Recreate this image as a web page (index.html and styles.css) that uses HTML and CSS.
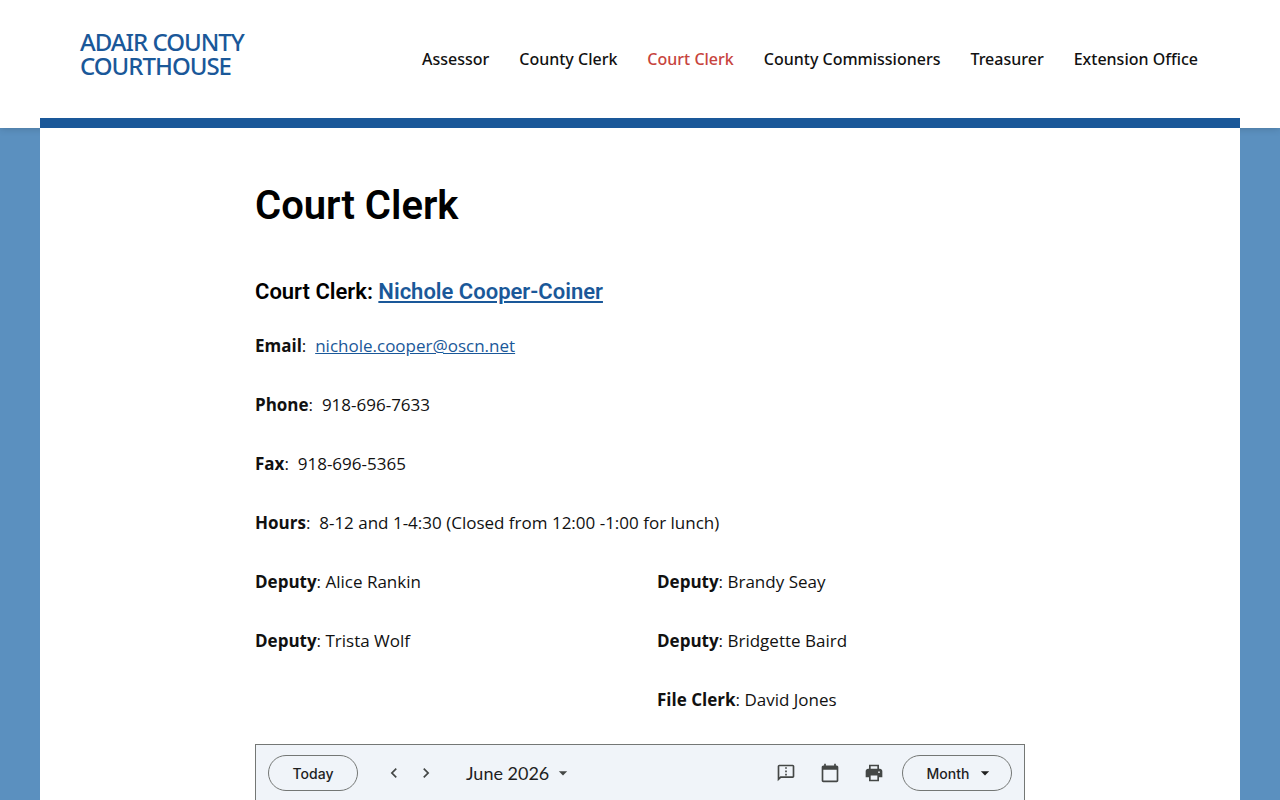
FILE: index.html
```
<!DOCTYPE html>
<html lang="en-US">
<head>
    <meta charset="UTF-8">
    <meta name="viewport" content="width=device-width, initial-scale=1.0">
    <title>Court Clerk - Adair County Courthouse</title>
    <link rel="stylesheet" href="styles.css">
</head>
<body>
    <header class="site-header">
        <a class="site-title" href="#">ADAIR COUNTY<br>COURTHOUSE</a>
        <nav class="main-nav" aria-label="Main">
            <a href="#">Assessor</a>
            <a href="#">County Clerk</a>
            <a href="#" class="current" aria-current="page">Court Clerk</a>
            <a href="#">County Commissioners</a>
            <a href="#">Treasurer</a>
            <a href="#">Extension Office</a>
        </nav>
    </header>

    <main class="site-content">
        <article class="entry">
            <h1>Court Clerk</h1>
            <h2>Court Clerk: <a href="#">Nichole Cooper-Coiner</a></h2>

            <p><strong>Email</strong>:&nbsp; <a href="mailto:nichole.cooper@oscn.net">nichole.cooper@oscn.net</a></p>
            <p><strong>Phone</strong>:&nbsp; 918-696-7633</p>
            <p><strong>Fax</strong>:&nbsp; 918-696-5365</p>
            <p><strong>Hours</strong>:&nbsp; 8-12 and 1-4:30 (Closed from 12:00 -1:00 for lunch)</p>

            <div class="columns">
                <div class="column">
                    <p><strong>Deputy</strong>: Alice Rankin</p>
                    <p><strong>Deputy</strong>: Trista Wolf</p>
                </div>
                <div class="column">
                    <p><strong>Deputy</strong>: Brandy Seay</p>
                    <p><strong>Deputy</strong>: Bridgette Baird</p>
                    <p><strong>File Clerk</strong>: David Jones</p>
                </div>
            </div>

            <!-- Calendar -->
            <section class="calendar" aria-label="Calendar">
                <div class="calendar-toolbar">
                    <button type="button" class="pill">Today</button>
                    <div class="pager">
                        <button type="button" class="icon-btn" aria-label="Previous month">
                            <svg width="20" height="20" viewBox="0 0 24 24"><path d="M15.41 7.41L14 6l-6 6 6 6 1.41-1.41L10.83 12z"/></svg>
                        </button>
                        <button type="button" class="icon-btn" aria-label="Next month">
                            <svg width="20" height="20" viewBox="0 0 24 24"><path d="M10 6L8.59 7.41 13.17 12l-4.58 4.59L10 18l6-6z"/></svg>
                        </button>
                    </div>
                    <button type="button" class="date-btn">
                        June 2026
                        <svg width="20" height="20" viewBox="0 0 24 24"><path d="M7 10l5 5 5-5z"/></svg>
                    </button>
                    <div class="tools">
                        <button type="button" class="icon-btn" aria-label="Send feedback">
                            <svg width="20" height="20" viewBox="0 0 24 24"><path d="M20 2H4c-1.100 0-2 .9-2 2v18l4-4h14c1.100 0 2-.9 2-2V4c0-1.100-.9-2-2-2zm0 14H5.200L4 17.200V4h16v12zM11 5h2v2h-2zm0 4h2v2h-2zm0 4h2v2h-2z"/></svg>
                        </button>
                        <button type="button" class="icon-btn" aria-label="Calendar">
                            <svg width="20" height="20" viewBox="0 0 24 24"><path d="M20 3h-1V1h-2v2H7V1H5v2H4c-1.100 0-2 .9-2 2v16c0 1.100.9 2 2 2h16c1.100 0 2-.9 2-2V5c0-1.100-.9-2-2-2zm0 18H4V8h16v13z"/></svg>
                        </button>
                        <button type="button" class="icon-btn" aria-label="Print">
                            <svg width="20" height="20" viewBox="0 0 24 24"><path fill-rule="evenodd" d="M18 7V2H6v5H5c-1.660 0-3 1.340-3 3v7h4v5h12v-5h4v-7c0-1.660-1.340-3-3-3h-1zM8 4h8v3H8V4zm8 16H8v-5h8v5zm2-8a1 1 0 1 1 0-2 1 1 0 0 1 0 2z"/></svg>
                        </button>
                    </div>
                    <button type="button" class="pill view-btn">
                        Month
                        <svg width="20" height="20" viewBox="0 0 24 24"><path d="M7 10l5 5 5-5z"/></svg>
                    </button>
                </div>
            </section>
        </article>
    </main>
</body>
</html>
```
FILE: styles.css
```
* {
    box-sizing: border-box;
}

body {
    margin: 0;
    background: #5b90bf;
    color: #111;
    font-family: "Open Sans", sans-serif;
    font-size: 17px;
    line-height: 30px;
}

a {
    color: #1a5899;
}

/* Header */
.site-header {
    display: flex;
    justify-content: space-between;
    align-items: center;
    min-height: 128px;
    padding: 0 82px 20px 80px;
    background: #fff;
    box-shadow: 0 0 8px rgba(0, 0, 0, 0.2);
    font-family: "Noto Sans", sans-serif;
    font-weight: 500;
}

.site-title {
    font-size: 24px;
    line-height: 24px;
    letter-spacing: -1px;
    text-decoration: none;
}

.main-nav {
    display: flex;
    gap: 30px;
    padding-top: 10px;
    font-size: 16px;
}

.main-nav a {
    color: #111;
    text-decoration: none;
    white-space: nowrap;
}

.main-nav .current {
    color: #c7443d;
}

/* Content */
.site-content {
    position: relative;
    min-height: calc(100vh - 118px);
    margin: -10px 40px 0;
    padding: 53px 40px 0;
    background: #fff;
    border-top: 10px solid #1a5899;
}

.entry {
    max-width: 770px;
    margin: 0 auto;
}

h1,
h2 {
    margin: 0;
    color: #000;
    font-family: Roboto, sans-serif;
    font-weight: 600;
}

h1 {
    margin-bottom: 46px;
    font-size: 40px;
    line-height: 50px;
}

h2 {
    margin-bottom: 24px;
    font-size: 22px;
    line-height: 30px;
}

p {
    margin: 0 0 29px;
}

.columns {
    display: grid;
    grid-template-columns: 1fr 1fr;
    gap: 34px;
}

/* Calendar */
.calendar {
    border: 1px solid #747775;
    border-bottom: 0;
    background: #f0f4f9;
    font-family: Inter, sans-serif;
}

.calendar-toolbar {
    display: flex;
    align-items: center;
    padding: 10px 12px;
}

.calendar button {
    display: flex;
    align-items: center;
    justify-content: center;
    height: 36px;
    padding: 0;
    border: 0;
    background: none;
    color: #1f1f1f;
    font-family: inherit;
    cursor: pointer;
}

.calendar svg {
    fill: currentColor;
}

.calendar .pill {
    width: 90px;
    border: 1px solid #747775;
    border-radius: 18px;
    font-size: 14px;
    font-weight: 500;
}

.calendar .view-btn {
    gap: 6px;
    width: 110px;
    padding-left: 8px;
}

.pager {
    display: flex;
    margin-left: 20px;
}

.calendar .icon-btn {
    width: 32px;
    color: #444746;
}

.calendar .date-btn {
    gap: 4px;
    margin-left: 24px;
    font-family: Lato, sans-serif;
    font-size: 18px;
}

.date-btn svg {
    color: #444746;
}

.tools {
    display: flex;
    gap: 12px;
    margin: 0 12px 0 auto;
}
```
